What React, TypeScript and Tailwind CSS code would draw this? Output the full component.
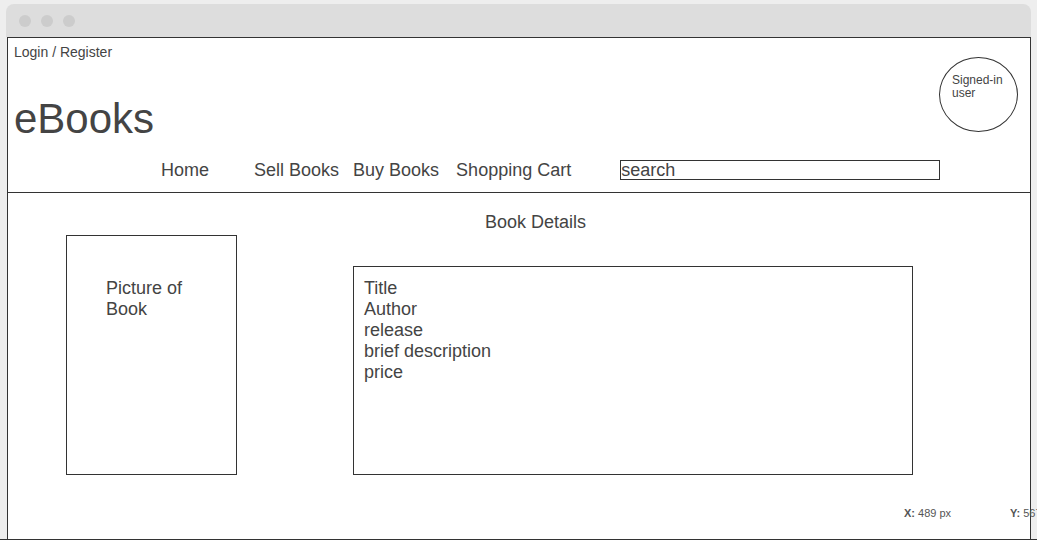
import React from 'react'

const navItems = [
    { label: 'Home', cls: 'ml-[153px]' },
    { label: 'Sell Books', cls: 'ml-[45px]' },
    { label: 'Buy Books', cls: 'ml-[14px]' },
    { label: 'Shopping Cart', cls: 'ml-[17px]' },
]

const details = ['Title', 'Author', 'release', 'brief description', 'price']

export default function App() {
    return (
        <div
            className="relative flex flex-col w-[1037px] h-[540px] overflow-hidden bg-[#eeeeee] text-[#444444]"
            style={{ fontFamily: '"Liberation Sans", Arial, sans-serif' }}
        >
            <div className="flex flex-col flex-1 pt-[4px] pl-[6px] w-[1031px]">
                {/* Window chrome */}
                <div className="flex items-center gap-[10px] h-[33px] pl-[13px] bg-[#dddddd] rounded-t-[8px]">
                    <span className="w-[12px] h-[12px] rounded-full bg-[#cccccc]" />
                    <span className="w-[12px] h-[12px] rounded-full bg-[#cccccc]" />
                    <span className="w-[12px] h-[12px] rounded-full bg-[#cccccc]" />
                </div>

                {/* Page */}
                <div className="flex-1 ml-[1px] bg-white border-t border-l border-r border-[#333333]">
                    {/* Header */}
                    <div className="flex justify-between h-[112px]">
                        <div className="flex flex-col pl-[6px]">
                            <div className="pt-[6px] text-[14px] leading-[16px]">Login / Register</div>
                            <div className="mt-[38px] text-[42px] leading-[42px]">eBooks</div>
                        </div>
                        <div className="mt-[19px] mr-[12px] w-[79px] h-[75px] rounded-[50%] border border-[#333333] pt-[16px] pl-[12px] text-[12px] leading-[13px]">
                            Signed-in
                            <br />
                            user
                        </div>
                    </div>

                    {/* Nav */}
                    <div className="flex items-center h-[43px] pb-[1px] border-b border-[#333333] text-[18px] leading-[21px]">
                        {navItems.map((item) => (
                            <span key={item.label} className={item.cls}>
                                {item.label}
                            </span>
                        ))}
                        <div className="ml-[49px] mb-[2px] w-[320px] h-[20px] border border-[#333333] text-[18px] leading-[18px]">
                            search
                        </div>
                    </div>

                    {/* Book details */}
                    <div className="pt-[19px]">
                        <div className="ml-[477px] text-[18px] leading-[21px]">Book Details</div>
                        <div className="flex items-end mt-[2px]">
                            <div className="ml-[58px] w-[171px] h-[240px] border border-[#333333] pt-[42px] pl-[39px] text-[18px] leading-[21px]">
                                Picture of
                                <br />
                                Book
                            </div>
                            <div className="ml-[116px] w-[560px] h-[209px] border border-[#333333] pt-[11px] pl-[10px] text-[18px] leading-[21px]">
                                {details.map((d) => (
                                    <div key={d}>{d}</div>
                                ))}
                            </div>
                        </div>
                    </div>
                </div>
            </div>
            <div className="h-[1px] w-full bg-[#333333]" />

            {/* Cursor coordinates overlay */}
            <div className="absolute left-[904px] top-[507px] flex text-[11px] leading-[12px] text-[#555555] whitespace-nowrap">
                <span className="w-[106px]">
                    <b>X:</b> 489 px
                </span>
                <span>
                    <b>Y:</b> 567
                </span>
            </div>
        </div>
    )
}
